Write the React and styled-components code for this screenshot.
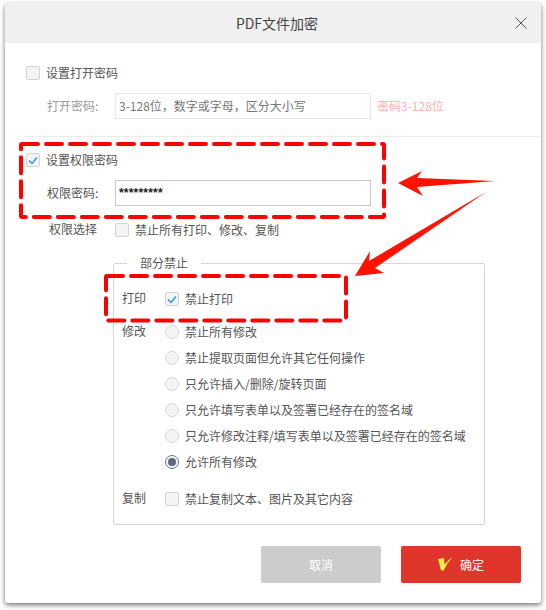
import React from "react";
import styled, { createGlobalStyle } from "styled-components";

const Global = createGlobalStyle`
  html, body { margin: 0; padding: 0; background: #fff; }
  body { font-family: "Noto Sans CJK SC", "Liberation Sans", sans-serif; font-size: 12px; color: #555; }
  * { box-sizing: border-box; }
`;

const Page = styled.div`
  position: relative;
  width: 546px;
  height: 610px;
  padding: 3px 5px 0;
  overflow: hidden;
`;

const Dialog = styled.div`
  width: 536px;
  height: 600px;
  background: #fff;
  border-radius: 3px;
  box-shadow: 0 2px 5px rgba(0, 0, 0, 0.55);
`;

const Header = styled.header`
  position: relative;
  height: 40px;
  padding-left: 8px;
  background: #f0f0f0;
  border-radius: 3px 3px 0 0;
  display: flex;
  align-items: center;
  justify-content: center;
  font-size: 14px;
  color: #444;
`;

const Close = styled.svg`
  position: absolute;
  right: 14px;
  top: 14px;
  width: 12px;
  height: 12px;
`;

const Section = styled.section`
  padding: ${(p) => p.$padding};
  margin-left: 20px;
  border-bottom: ${(p) => (p.$divider ? "1px solid #ececec" : "none")};
`;

const Row = styled.div`
  display: flex;
  align-items: center;
  height: ${(p) => p.$height || 20}px;
  margin-top: ${(p) => p.$top || 0}px;
`;

const Box = styled.span`
  flex: none;
  width: 14px;
  height: 14px;
  border: 1px solid #d4d4d4;
  border-radius: 2px;
  background: #f4f4f4;
  margin-right: 6px;
  display: flex;
  align-items: center;
  justify-content: center;
`;

const Radio = styled.span`
  flex: none;
  width: 14px;
  height: 14px;
  border: 1px solid ${(p) => (p.$on ? "#6a7587" : "#d8d8d8")};
  border-radius: 50%;
  background: #f4f4f4;
  margin-right: 6px;
  display: flex;
  align-items: center;
  justify-content: center;
  &::after {
    content: "";
    display: ${(p) => (p.$on ? "block" : "none")};
    width: 8px;
    height: 8px;
    border-radius: 50%;
    background: #5d6a80;
  }
`;

const Text = styled.span`
  color: #555;
  white-space: nowrap;
  padding-bottom: 2px;
`;

const FieldLabel = styled.span`
  flex: none;
  width: ${(p) => p.$width}px;
  padding-left: ${(p) => p.$indent || 0}px;
  padding-bottom: ${(p) => p.$lift || 2}px;
  color: ${(p) => p.$color || "#555"};
`;

const Input = styled.div`
  width: 256px;
  height: 26px;
  border: 1px solid #e6e6e6;
  display: flex;
  align-items: center;
  padding: 0 3px 2px;
  color: #777;
  white-space: nowrap;
`;

const PasswordInput = styled(Input)`
  padding-bottom: 0;
  border-color: #c6c6c6;
  color: #222;
  font-family: "Liberation Sans", sans-serif;
  font-weight: 700;
  letter-spacing: 0.2px;
`;

const Hint = styled.span`
  margin-left: 6px;
  padding-bottom: 2px;
  color: #ffb1b1;
`;

const Group = styled.fieldset`
  display: block;
  margin: 15px 0 0 87px;
  padding: 15px 0 0 8px;
  width: 372px;
  height: 270px;
  min-width: 0;
  border: 1px solid #d6d6d6;
  border-radius: 2px;
`;

const Legend = styled.legend`
  margin-left: 5px;
  padding: 0 13px;
  height: 16px;
  line-height: 16px;
  font-size: 12px;
`;

const OptionRow = styled.div`
  display: flex;
  align-items: center;
  height: 26px;
  margin-top: ${(p) => p.$top || 0}px;
`;

const OptionLabel = styled.span`
  flex: none;
  width: 43px;
  padding-bottom: 3px;
`;

const Footer = styled.footer`
  display: flex;
  justify-content: flex-end;
  gap: 20px;
  margin-top: 21px;
  padding-right: 20px;
`;

const Button = styled.button`
  width: 120px;
  height: 37px;
  border: 0;
  border-radius: 2px;
  background: ${(p) => (p.$primary ? "#e0352b" : "#cccccc")};
  color: #fff;
  font: inherit;
  display: flex;
  align-items: center;
  justify-content: center;
  gap: 7px;
  padding: 0 0 1px;
`;

const Annotations = styled.svg`
  position: absolute;
  left: 0;
  top: 0;
  width: 546px;
  height: 610px;
  pointer-events: none;
`;

const Check = () => (
  <svg width="10" height="9" viewBox="0 0 10 9">
    <path d="M1 4.5 L4 7.5 L9 1.5" fill="none" stroke="#2d96f5" strokeWidth="1.5" />
  </svg>
);

const modify = [
  "禁止所有修改",
  "禁止提取页面但允许其它任何操作",
  "只允许插入/删除/旋转页面",
  "只允许填写表单以及签署已经存在的签名域",
  "只允许修改注释/填写表单以及签署已经存在的签名域",
  "允许所有修改",
];

export default function App() {
  return (
    <Page>
      <Global />
      <Dialog>
        <Header>
          PDF文件加密
          <Close viewBox="0 0 12 12">
            <path d="M0.5 0.5 L11.5 11.5 M11.5 0.5 L0.5 11.5" stroke="#555" strokeWidth="1" fill="none" />
          </Close>
        </Header>
        <Section $padding="20px 0 17px 1px" $divider>
          <Row>
            <Box />
            <Text>设置打开密码</Text>
          </Row>
          <Row $height={26} $top={10}>
            <FieldLabel $width={89} $indent={21} $color="#999">打开密码:</FieldLabel>
            <Input>3-128位，数字或字母，区分大小写</Input>
            <Hint>密码3-128位</Hint>
          </Row>
        </Section>
        <Section $padding="13px 0 0 1px">
          <Row>
            <Box><Check /></Box>
            <Text>设置权限密码</Text>
          </Row>
          <Row $height={26} $top={10}>
            <FieldLabel $width={89} $indent={21}>权限密码:</FieldLabel>
            <PasswordInput>*********</PasswordInput>
          </Row>
          <Row $top={14}>
            <FieldLabel $width={89} $indent={23} $lift={4}>权限选择</FieldLabel>
            <Box />
            <Text>禁止所有打印、修改、复制</Text>
          </Row>
          <Group>
            <Legend>部分禁止</Legend>
            <OptionRow>
              <OptionLabel>打印</OptionLabel>
              <Box><Check /></Box>
              <Text>禁止打印</Text>
            </OptionRow>
            {modify.map((m, i) => (
              <OptionRow key={m} $top={i === 0 ? 7 : 0}>
                <OptionLabel>{i === 0 ? "修改" : ""}</OptionLabel>
                <Radio $on={i === modify.length - 1} />
                <Text>{m}</Text>
              </OptionRow>
            ))}
            <OptionRow $top={11}>
              <OptionLabel>复制</OptionLabel>
              <Box />
              <Text>禁止复制文本、图片及其它内容</Text>
            </OptionRow>
          </Group>
        </Section>
        <Footer>
          <Button>取消</Button>
          <Button $primary>
            <svg width="15" height="14" viewBox="0 0 15 14">
              <path d="M0 2 L6 1 L6.5 7.5 Q10 3 14.5 0 Q9 6 5.5 13.5 L3 13.5 Z" fill="#f7ec4e" />
            </svg>
            确定
          </Button>
        </Footer>
      </Dialog>
      <Annotations viewBox="0 0 546 610">
        <rect x="21" y="144" width="363" height="73" rx="1" fill="none" stroke="#ff0000" strokeWidth="4" strokeDasharray="16 8" strokeLinecap="round" />
        <rect x="106" y="276" width="240" height="44.5" rx="1" fill="none" stroke="#ff0000" strokeWidth="4" strokeDasharray="16 8" strokeLinecap="round" />
        <polygon points="398,183 422,171 417,178 495,181 417,187 423,196" fill="#ff1200" />
        <polygon points="355,276 370,251 369,261 486,192 375,268 384,273" fill="#ff1200" />
      </Annotations>
    </Page>
  );
}
